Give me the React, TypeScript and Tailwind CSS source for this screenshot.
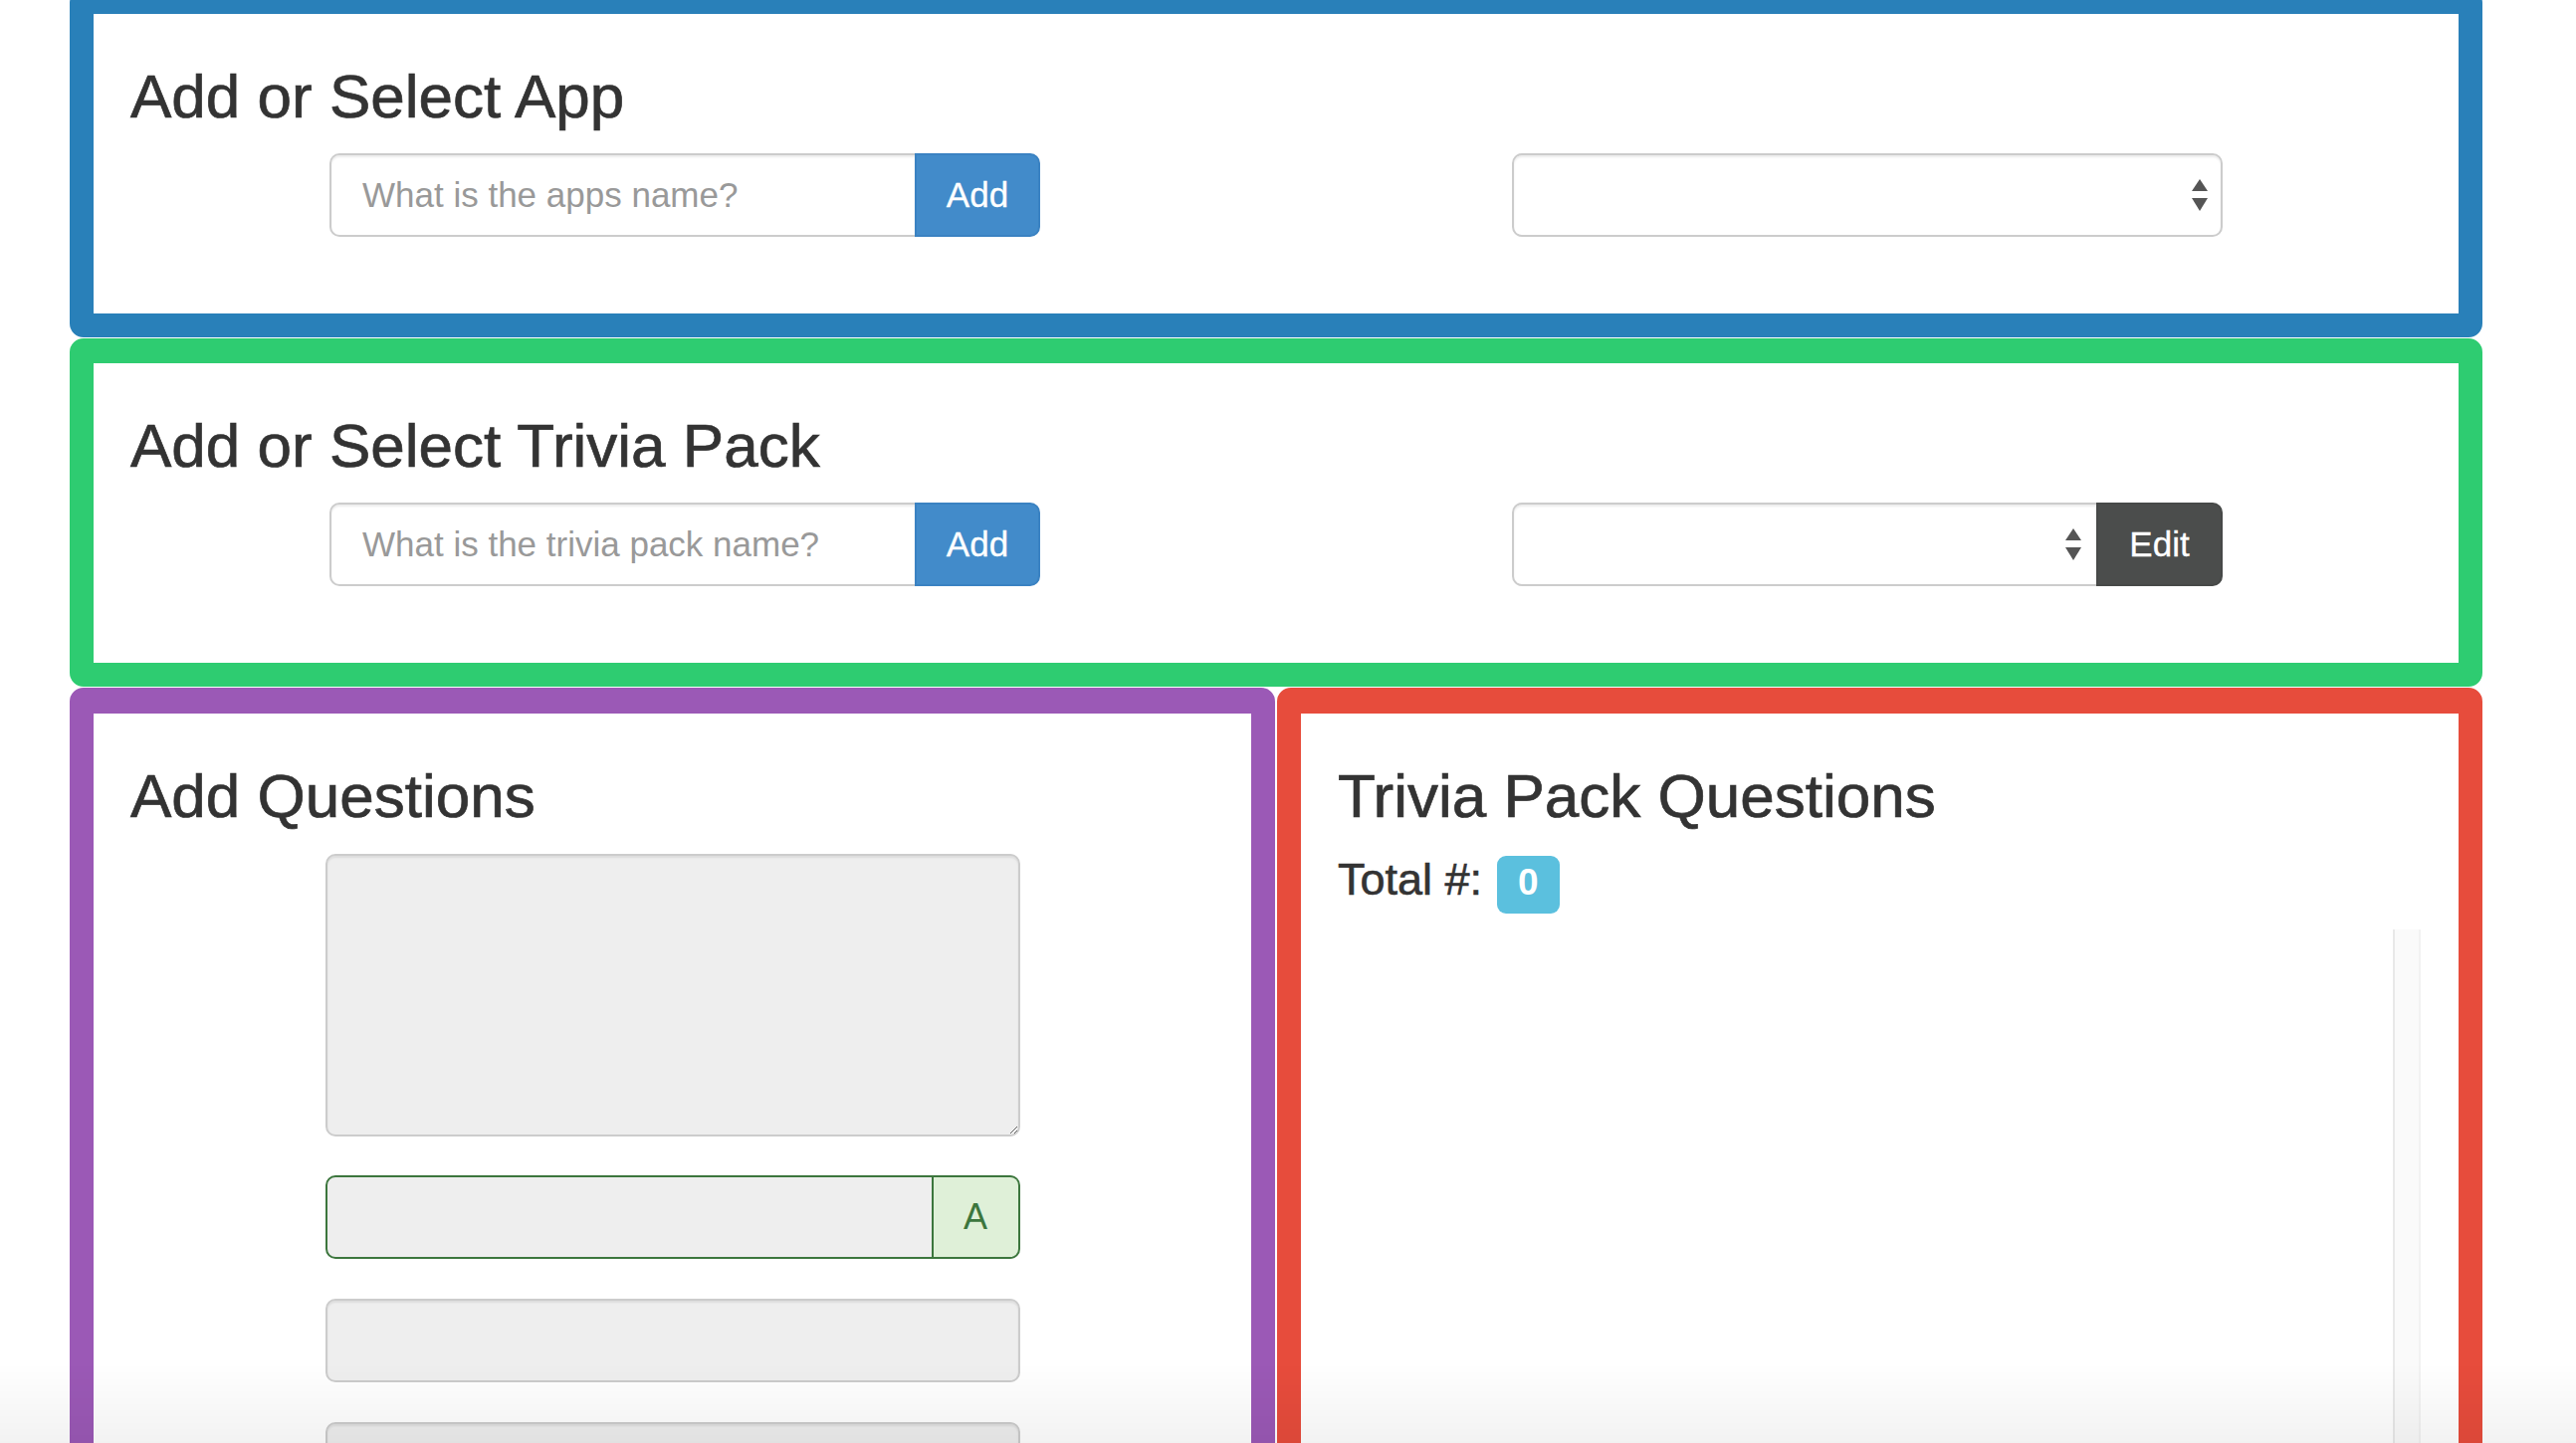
import React from "react";

function SelectArrows() {
  return (
    <svg width="16" height="32" viewBox="0 0 16 32" className="pointer-events-none absolute right-[15px] top-1/2 -translate-y-1/2">
      <path d="M8 0 L16 12 L0 12 Z" fill="#555" />
      <path d="M0 19 L16 19 L8 32 Z" fill="#555" />
    </svg>
  );
}

function Heading({ children }: { children: React.ReactNode }) {
  return (
    <h2 className="pl-[37px] text-[62px] leading-[68px] font-normal text-[#333] [-webkit-text-stroke:0.7px_#333]">
      {children}
    </h2>
  );
}

function AddGroup({ placeholder }: { placeholder: string }) {
  return (
    <div className="mx-auto flex h-[84px] w-[714px]">
      <input
        placeholder={placeholder}
        className="h-full min-w-0 flex-1 rounded-l-[10px] border-2 border-r-0 border-[#ccc] bg-white pl-[31px] text-[35px] text-[#555] shadow-[inset_0_2px_2px_rgba(0,0,0,0.075)] outline-none placeholder:text-[#999]"
      />
      <button className="h-full w-[126px] rounded-r-[10px] border-2 border-[#3a82c2] bg-[#428bca] text-[35px] text-white [-webkit-text-stroke:0.3px_#fff]">
        Add
      </button>
    </div>
  );
}

function Panel({
  color,
  className,
  children,
}: {
  color: string;
  className?: string;
  children: React.ReactNode;
}) {
  return <section className={`rounded-[14px] border-[24px] bg-white ${color} ${className ?? ""}`}>{children}</section>;
}

export default function App() {
  return (
    <div className="relative min-h-screen overflow-hidden bg-white font-['Liberation_Sans',Arial,sans-serif] text-[#333]">
      <div className="-mt-[11px] ml-[70px] w-[2424px]">
        <Panel color="border-[#2980b9]" className="border-t-[25px] pt-[49px] pb-[77px]">
          <Heading>Add or Select App</Heading>
          <div className="mt-[23px] grid grid-cols-2">
            <AddGroup placeholder="What is the apps name?" />
            <div className="relative mx-auto h-[84px] w-[714px]">
              <select className="h-full w-full appearance-none rounded-[10px] border-2 border-[#ccc] bg-white shadow-[inset_0_2px_2px_rgba(0,0,0,0.075)] outline-none" />
              <SelectArrows />
            </div>
          </div>
        </Panel>

        <Panel color="border-[#2ecc71]" className="mt-[1px] border-t-[25px] pt-[49px] pb-[77px]">
          <Heading>Add or Select Trivia Pack</Heading>
          <div className="mt-[23px] grid grid-cols-2">
            <AddGroup placeholder="What is the trivia pack name?" />
            <div className="mx-auto flex h-[84px] w-[714px]">
              <div className="relative h-full flex-1">
                <select className="h-full w-full appearance-none rounded-l-[10px] border-2 border-r-0 border-[#ccc] bg-white shadow-[inset_0_2px_2px_rgba(0,0,0,0.075)] outline-none" />
                <SelectArrows />
              </div>
              <button className="h-full w-[127px] rounded-r-[10px] border-2 border-[#474948] bg-[#4b4d4c] text-[35px] text-white [-webkit-text-stroke:0.3px_#fff]">
                Edit
              </button>
            </div>
          </div>
        </Panel>

        <div className="mt-[1px] grid grid-cols-2 gap-[2px]">
          <Panel color="border-[#9b59b6]" className="min-h-[900px] border-t-[26px] pt-[49px]">
            <Heading>Add Questions</Heading>
            <div className="mx-auto mt-[24px] flex w-[698px] flex-col gap-[40px]">
              <textarea
                disabled
                className="mb-[-1px] h-[284px] w-full rounded-[10px] border-2 border-[#ccc] bg-[#eee] shadow-[inset_0_2px_2px_rgba(0,0,0,0.075)]"
              />
              <div className="flex h-[84px] w-full">
                <input
                  disabled
                  className="h-full min-w-0 flex-1 rounded-l-[10px] border-2 border-[#3c763d] bg-[#eee]"
                />
                <span className="flex h-full w-[87px] items-center justify-center rounded-r-[10px] border-2 border-l-0 border-[#3c763d] bg-[#dff0d8] text-[36px] text-[#3c763d]">
                  A
                </span>
              </div>
              {[0, 1, 2].map((i) => (
                <input
                  key={i}
                  disabled
                  className="h-[84px] w-full rounded-[10px] border-2 border-[#ccc] bg-[#eee] shadow-[inset_0_2px_2px_rgba(0,0,0,0.075)]"
                />
              ))}
            </div>
          </Panel>

          <Panel color="border-[#e74c3c]" className="min-h-[900px] border-t-[26px] pt-[49px]">
            <Heading>Trivia Pack Questions</Heading>
            <div className="mt-[25px] flex items-baseline pl-[37px] text-[45px] leading-[1.1] [-webkit-text-stroke:0.6px_#333]">
              <span>Total #:</span>
              <span className="ml-[15px] inline-block rounded-[9px] bg-[#5bc0de] px-[21px] pt-[8px] pb-[13px] text-[37px] leading-[37px] font-bold text-white [-webkit-text-stroke:0px_#fff]">
                0
              </span>
            </div>
            <div className="mx-[38px] mt-[16px] flex h-[700px]">
              <div className="flex-1" />
              <div className="w-[28px] border-l-2 border-r-2 border-l-[#e8e8e8] border-r-[#f2f2f2] bg-[#fafafa]" />
            </div>
          </Panel>
        </div>
      </div>
      <div className="pointer-events-none fixed inset-x-0 bottom-0 h-[80px] bg-linear-to-b from-transparent to-black/[0.05]" />
    </div>
  );
}
